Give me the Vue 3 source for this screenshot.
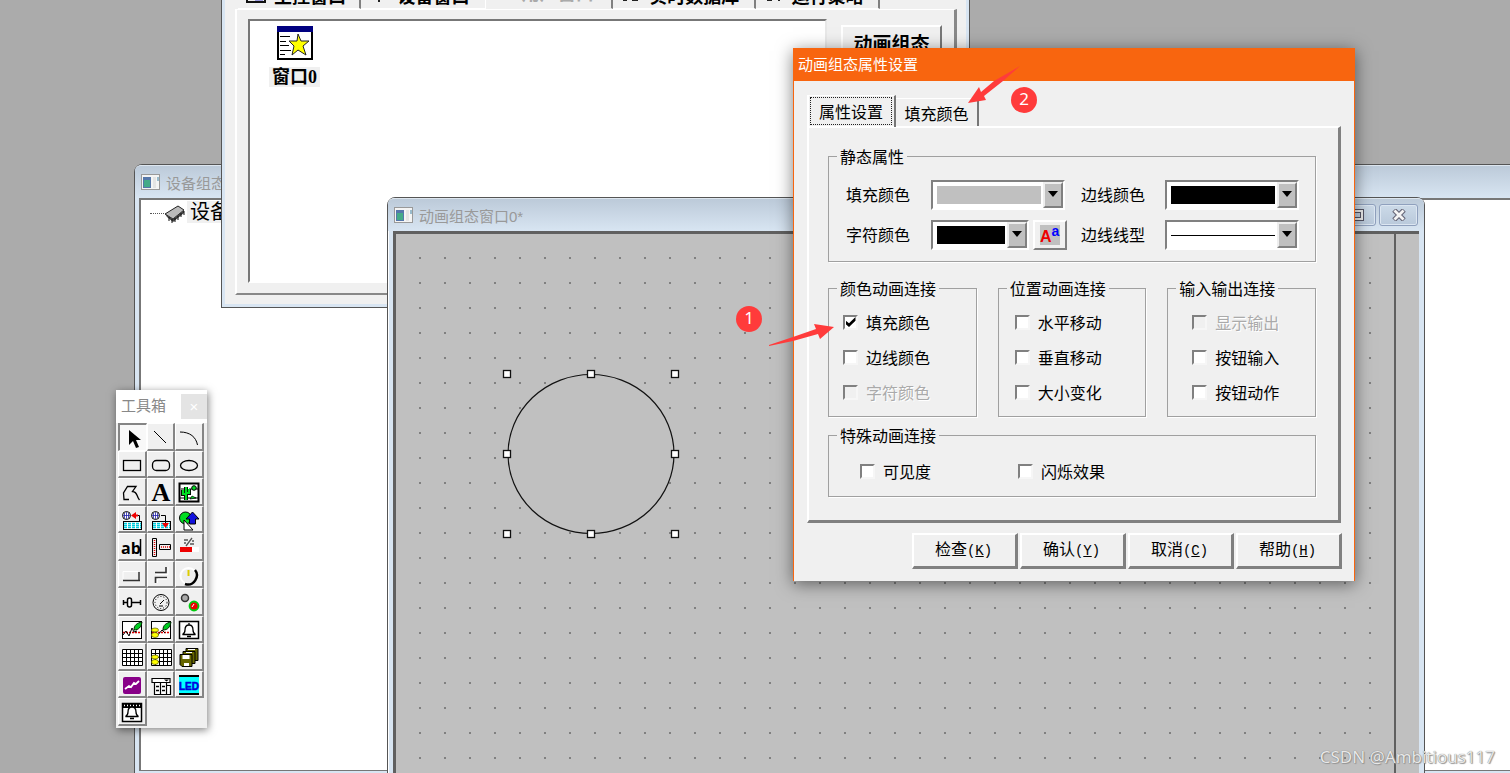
<script setup>
import { ref, reactive } from 'vue'

const fillColor = ref('#c0c0c0')
const edgeColor = ref('#000000')
const charColor = ref('#000000')
const lineStyle = ref('solid')

const groups = reactive([
  {
    title: '颜色动画连接', kind: 'near',
    items: [
      { id: 'c-fill', text: '填充颜色', on: true },
      { id: 'c-edge', text: '边线颜色', on: false },
      { id: 'c-char', text: '字符颜色', on: false, disabled: true }
    ]
  },
  {
    title: '位置动画连接', kind: 'middle',
    items: [
      { id: 'p-h', text: '水平移动', on: false },
      { id: 'p-v', text: '垂直移动', on: false },
      { id: 'p-s', text: '大小变化', on: false }
    ]
  },
  {
    title: '输入输出连接', kind: 'far',
    items: [
      { id: 'i-show', text: '显示输出', on: false, disabled: true },
      { id: 'i-in', text: '按钮输入', on: false },
      { id: 'i-act', text: '按钮动作', on: false }
    ]
  }
])
const special = reactive([
  { id: 's-vis', text: '可见度', on: false },
  { id: 's-blink', text: '闪烁效果', on: false }
])
const actions = [
  { text: '检查', key: 'K' },
  { text: '确认', key: 'Y' },
  { text: '取消', key: 'C' },
  { text: '帮助', key: 'H' }
]
const handles = [
  [507, 374], [591, 374], [675, 374], [507, 454],
  [675, 454], [507, 534], [591, 534], [675, 534]
]

const k = 'fill="none" stroke="#000"'
const grid = '<path d="M4.500 5.500h20v16h-20zM8.500 5.500v16M12.500 5.500v16M16.500 5.500v16M20.500 5.500v16M4.500 9.500h20M4.500 13.500h20M4.500 17.500h20" fill="#fff" stroke="#000"/>'
const globe = '<circle cx="8.500" cy="8.500" r="4" fill="#fff" stroke="#000"/><path d="M5 8.500h7M8.500 5v7M6.500 6v5M10.500 6v5" stroke="#22a" stroke-width=".8"/>'
const cyan = '<rect x="5.500" y="14.500" width="18" height="8" fill="#fff" stroke="#000"/><path d="M6 16.500h17M6 18.500h17M6 20.500h17" stroke="#0cd" stroke-width="1.400" stroke-dasharray="3 1"/>'
const coins = '<g fill="#ff0" stroke="#550" stroke-width=".7"><ellipse cx="8" cy="18" rx="3.500" ry="2.500"/><ellipse cx="8" cy="13" rx="3.500" ry="2"/></g>'
const leaf = '<path d="M16 13c0-5 3-7 8-8-1 5-3 8-8 8z" fill="#0c2" stroke="#020"/>'
const bell = '<path d="M14 6v2M7.500 17.500c2-1 2.500-2 2.500-4.500 0-3 1.500-5 4-5s4 2 4 5c0 2.500.5 3.500 2.500 4.500zM12 19.500h4" fill="#fff" stroke="#000" stroke-width="1.300"/>'
const tools = [
  { name: '选择', svg: '<path d="M10 5v15l4-4 3 7 3-1-3-7h5z"/>' },
  { name: '直线', svg: `<path d="M7 7l12 12" ${k}/>` },
  { name: '弧线', svg: `<path d="M5 8C15 8 21 13 22.500 21" ${k}/>` },
  { name: '矩形', svg: `<rect x="5.500" y="8.500" width="17" height="10" ${k} stroke-width="1.300"/>` },
  { name: '圆角矩形', svg: `<rect x="5.500" y="8.500" width="17" height="10" rx="4" ${k} stroke-width="1.300"/>` },
  { name: '椭圆', svg: `<ellipse cx="14" cy="13.500" rx="8.500" ry="5" ${k} stroke-width="1.300"/>` },
  { name: '多边形', svg: `<path d="M11 20.500H6L5.500 14 9.500 7.500H18L14.500 12.500C20 13 18 17 21.500 21" ${k} stroke-width="1.300"/>` },
  { name: '标签', svg: '<text x="14" y="21.500" text-anchor="middle" font-family="Liberation Serif, serif" font-weight="bold" font-size="26">A</text>' },
  { name: '位图', svg: '<rect x="4.500" y="4.500" width="19" height="18" fill="#fff" stroke="#000" stroke-width="2"/><path d="M5 19h18M14 10h9M6 10h3" stroke="#000"/><path d="M11 21V8M8 11v4h3M14 10v4h-3" fill="none" stroke="#000" stroke-width="4"/><path d="M11 21V8M8 11v4h3M14 10v4h-3" fill="none" stroke="#0d2" stroke-width="2.200"/><circle cx="19" cy="9" r="2.300" fill="#0d2" stroke="#000"/><path d="M15 20l2-3 4 2z" fill="#0d2" stroke="#000" stroke-width=".7"/>' },
  { name: '插入元件', svg: globe + cyan + '<path d="M18 8.500h3.500v6" fill="none" stroke="#000"/><path d="M13 8.500l5-3.500v2.500h2v2h-2V12z" fill="#e00"/>' },
  { name: '保存元件', svg: globe + cyan + '<path d="M14 8.500h4.500v8" fill="none" stroke="#000"/><path d="M15 16h7l-3.500 5z" fill="#e00"/>' },
  { name: '常用符号', svg: '<circle cx="10.500" cy="11" r="6" fill="#0d2" stroke="#000"/><path d="M9 13l9 10H9z" fill="#fff" stroke="#000"/><path d="M17.500 5l6.500 7h-3.500v5h-6v-5H11z" fill="#11d" stroke="#000"/>' },
  { name: '输入框', svg: '<text x="3" y="20" font-family="Open Sans, sans-serif" font-weight="bold" font-size="16">ab</text><path d="M22.500 5v17" stroke="#000" stroke-width="1.500"/>' },
  { name: '流动块', svg: `<path d="M5.500 4.500h4v18h-4zM12.500 10.500h11v5h-11z" ${k}/><path d="M7.500 6v15M14 13h9" stroke="#d00" stroke-width="1.500" stroke-dasharray="1 1"/>` },
  { name: '百分比', svg: '<path d="M17 4l-6 8M9 6h4M15 10h4M9 9h2M17 7h2" stroke="#555" stroke-width="1.300"/><path d="M5 13h12v5H5z" fill="#e00"/><path d="M17 13h7v5h-7z" fill="#fff"/>' },
  { name: '标准按钮', svg: '<path d="M5 18.500h17" stroke="#333" stroke-width="1.500"/><path d="M21 10v9" stroke="#333" stroke-width="1.500"/><path d="M5 17V9.500h15" fill="none" stroke="#fff"/>' },
  { name: '自由管道', svg: '<path d="M8 10.500h11V5M8.500 21v-5.500H20" fill="none" stroke="#333" stroke-width="1.600"/><path d="M9 12.500h12V5M10.500 21v-4H20" fill="none" stroke="#fff"/>' },
  { name: '旋钮', svg: '<circle cx="13.500" cy="14" r="8" fill="#eee" stroke="#fff" stroke-width="2"/><path d="M20 8c5 6-1 17-10 14" fill="none" stroke="#000" stroke-width="2.500"/><path d="M13.500 8v6" stroke="#dc0" stroke-width="2"/>' },
  { name: '滑动输入', svg: '<path d="M5 13.500h18M5.500 11v5M22.500 11v5" stroke="#000" stroke-width="1.500"/><rect x="9.500" y="9" width="4" height="9" rx="2" fill="#fff" stroke="#000" stroke-width="1.500"/>' },
  { name: '仪表', svg: `<circle cx="14" cy="13.500" r="8" ${k}/><circle cx="14" cy="13.500" r="6" ${k} stroke-dasharray="1 2"/><path d="M13 15l4-4M12 17h4" ${k}/>` },
  { name: '动画按钮', svg: '<circle cx="10" cy="9" r="3.500" fill="#aaa" stroke="#333" stroke-width="1.500"/><circle cx="19" cy="17" r="4.500" fill="#e00" stroke="#0c1" stroke-width="1.800"/><path d="M17 18l2-3" stroke="#fff"/>' },
  { name: '实时曲线', svg: `<rect x="4.500" y="4.500" width="19" height="17" fill="#fff" stroke="#000"/><path d="M5 15.500h18" stroke="#d00" stroke-width="1.500" stroke-dasharray="2 1"/><path d="M5 18l3-4 3 5 3-8 2 4 3-1" ${k}/>` + leaf },
  { name: '历史曲线', svg: `<rect x="4.500" y="4.500" width="19" height="17" fill="#fff" stroke="#000"/><path d="M5 15.500h18" stroke="#d00" stroke-width="1.500" stroke-dasharray="2 1"/><path d="M10 19l5-6 3 3" ${k}/>` + coins + leaf },
  { name: '报警显示', svg: '<rect x="4.500" y="4.500" width="19" height="17" fill="#fff" stroke="#000" stroke-width="1.500"/>' + bell },
  { name: '自由表格', svg: grid },
  { name: '历史表格', svg: grid + coins },
  { name: '存盘浏览', svg: '<g fill="#660" stroke="#000"><path d="M11 4.500h12v12H11z"/><path d="M8 7.500h12v12H8z"/><path d="M5 10.500h12v12H7l-2-2z"/></g><path d="M7.500 11h7v4h-7zM9 19h5v3H9zM13 5h7v1h-7zM11 8h6v1h-6z" fill="#fff"/>' },
  { name: '计划曲线', svg: '<rect x="5" y="5" width="18" height="17" rx="2" fill="#808"/><path d="M7 17l4-3 2 1 3-4 2 1 3-3" fill="none" stroke="#fff" stroke-width="1.800"/>' },
  { name: '组合框', svg: '<path d="M5 6.500h18v4H5zM7.500 10.500h12v12h-12zM13.500 10.500v12M19.500 13.500h4v9h-4" fill="#fff" stroke="#000" stroke-width="1.200"/><path d="M9 14.500h3M9 18.500h3M15 14.500h3M15 18.500h3" stroke="#000" stroke-width="1.500"/><path d="M17 7.500h5l-2.500 2z"/>' },
  { name: '数码显示', svg: '<path d="M4 4h20v18H4z" fill="#0ff"/><path d="M4 3h20v2H4zM4 21h20v2H4z"/><text x="14" y="18" text-anchor="middle" font-family="Liberation Sans, sans-serif" font-weight="bold" font-size="10" stroke="#00d" stroke-width=".5" fill="#00d">LED</text>' },
  { name: '报警浏览', svg: '<rect x="4.500" y="4.500" width="19" height="18" fill="#fff" stroke="#000" stroke-width="1.500"/><path d="M4 4h20v5H4z"/><path d="M6 6.500h17" stroke="#fff" stroke-width="1.500" stroke-dasharray="1 2"/>' + bell }
]
</script>

<template>
  <main class="desktop">
    <section class="win device">
      <header class="caption">
        <svg class="appicon" width="19" height="18" viewBox="0 0 19 18"><rect x=".5" y="1.500" width="18" height="15" fill="#f4f4f4" stroke="#999" /><rect x="2" y="4" width="8" height="11" fill="#57a" /><rect x="3" y="7" width="6" height="7" fill="#4a8" /><rect x="12" y="4" width="3" height="11" fill="#e4e4e4" /><rect x="16" y="4" width="2" height="4" fill="#9bc" /></svg>
        <span>设备组态</span>
      </header>
      <div class="tree">
        <i class="branch"></i>
        <svg width="22" height="18" viewBox="0 0 22 18"><path d="M1 9L14 1l6 4-11 9z" fill="#bbb" stroke="#222" /><path d="M1 9l8 5 11-9v3L9 17 3 12z" fill="#444" /><path d="M5 12v4M8 14v4M11 13v4M14 11v4M17 8v4M20 6v4" stroke="#111" /></svg>
        <span class="node">设备</span>
      </div>
    </section>

    <section class="win project">
      <nav class="tabs">
        <button type="button" class="t1"><svg width="20" height="18" viewBox="0 0 20 18"><path d="M1 1h18v15H1z" fill="#eee" stroke="#111" stroke-width="2" /><path d="M9 5h8v10H9z" fill="#99d" /></svg>主控窗口</button>
        <button type="button" class="t2"><svg width="20" height="18" viewBox="0 0 20 18"><path d="M5 10h8v2h-2v4H9v-3H5z" fill="#222" /></svg>设备窗口</button>
        <button type="button" class="t3"><svg width="20" height="18" viewBox="0 0 20 18"><path d="M0 16h20" stroke="#daa" stroke-width="2" /></svg>用户窗口</button>
        <button type="button" class="t4"><svg width="20" height="18" viewBox="0 0 20 18"><path d="M2 9h4v6H2zM11 11h6v4h-6z" fill="#222" /></svg>实时数据库</button>
        <button type="button" class="t5"><svg width="20" height="18" viewBox="0 0 20 18"><path d="M3 9h5v6H3zM11 7h5v8h-2v-5h-3z" fill="#222" /></svg>运行策略</button>
      </nav>
      <div class="page">
        <div class="list">
          <a class="file" href="#win0">
            <svg width="36" height="34" viewBox="0 0 36 34"><path d="M1 1h34v32H1z" fill="#fff" stroke="#000" stroke-width="2" /><path d="M0 0h36v6H0z" fill="#000080" /><path d="M3 10.500h10M3 15.500h6M3 19.500h9M3 24.500h11M3 28.500h5" stroke="#000" /><path d="M21 8l3 7h8l-6 5 3 9-8-5-6 5 2-9-5-5h8z" fill="#ff0" stroke="#222" /></svg>
            <b>窗口0</b>
          </a>
        </div>
        <button type="button" class="animate">动画组态</button>
      </div>
    </section>

    <section class="win canvas-win">
      <header class="caption">
        <svg class="appicon" width="19" height="18" viewBox="0 0 19 18"><rect x=".5" y="1.500" width="18" height="15" fill="#f4f4f4" stroke="#999" /><rect x="2" y="4" width="8" height="11" fill="#57a" /><rect x="3" y="7" width="6" height="7" fill="#4a8" /><rect x="12" y="4" width="3" height="11" fill="#e4e4e4" /><rect x="16" y="4" width="2" height="4" fill="#9bc" /></svg>
        <span>动画组态窗口0*</span>
        <div class="sys">
          <button type="button" aria-label="最大化"><svg width="14" height="12" viewBox="0 0 14 12"><rect x="2" y="2" width="10" height="8" fill="none" stroke="#556" stroke-width="4" /><rect x="2" y="2" width="10" height="8" fill="none" stroke="#eee" stroke-width="2" /></svg></button>
          <button type="button" aria-label="关闭"><svg width="14" height="12" viewBox="0 0 14 12"><path d="M2 1l10 10M12 1L2 11" stroke="#667" stroke-width="5" /><path d="M2.500 1.500l9 9M11.500 1.500l-9 9" stroke="#f4f4f4" stroke-width="2.800" /></svg></button>
        </div>
      </header>
      <div class="stage"><div class="dots"></div><div class="gutter"></div></div>
    </section>

    <svg class="shape" width="180" height="172" viewBox="501 368 180 172">
      <ellipse cx="591" cy="454" rx="83" ry="79.500" fill="#c0c0c0" stroke="#111" stroke-width="1.200" />
      <rect v-for="(h, i) in handles" :key="i" :x="h[0] - 3.5" :y="h[1] - 3.5" width="7" height="7" fill="#fff" stroke="#111" stroke-width="1.300" />
    </svg>

    <aside class="toolbox">
      <header><span>工具箱</span><button type="button">×</button></header>
      <div class="tools">
        <button v-for="(t, i) in tools" :key="t.name" type="button" :class="{ down: i === 0 }" :aria-label="t.name">
          <svg width="28" height="27" viewBox="1 0 28 27" v-html="t.svg"></svg>
        </button>
      </div>
    </aside>

    <form class="dialog" @submit.prevent>
      <header>动画组态属性设置</header>
      <div class="body">
        <nav class="dtabs">
          <button type="button" class="active"><span>属性设置</span></button>
          <button type="button">填充颜色</button>
        </nav>
        <div class="sheet">
          <fieldset class="static">
            <legend>静态属性</legend>
            <div class="fields">
              <label for="fill">填充颜色</label>
              <div class="combo"><select id="fill" v-model="fillColor" :style="{ '--swatch': fillColor }"><option value="#c0c0c0"></option></select><i></i></div>
              <label for="edge">边线颜色</label>
              <div class="combo"><select id="edge" v-model="edgeColor" :style="{ '--swatch': edgeColor }"><option value="#000000"></option></select><i></i></div>
              <label for="char">字符颜色</label>
              <div class="pair">
                <div class="combo"><select id="char" v-model="charColor" :style="{ '--swatch': charColor }"><option value="#000000"></option></select><i></i></div>
                <button type="button" class="font" aria-label="字体"><span><b>A</b><sup>a</sup></span></button>
              </div>
              <label for="line">边线线型</label>
              <div class="combo line"><select id="line" v-model="lineStyle"><option value="solid"></option></select><i></i></div>
            </div>
          </fieldset>
          <div class="groups">
            <fieldset v-for="g in groups" :key="g.title" :class="g.kind">
              <legend>{{ g.title }}</legend>
              <label v-for="c in g.items" :key="c.id" :for="c.id" class="check" :class="{ off: c.disabled }">
                <input :id="c.id" v-model="c.on" type="checkbox" :disabled="c.disabled"><span>{{ c.text }}</span>
              </label>
            </fieldset>
          </div>
          <fieldset class="special">
            <legend>特殊动画连接</legend>
            <label v-for="c in special" :key="c.id" :for="c.id" class="check">
              <input :id="c.id" v-model="c.on" type="checkbox"><span>{{ c.text }}</span>
            </label>
          </fieldset>
        </div>
        <footer>
          <button v-for="a in actions" :key="a.key" type="button">{{ a.text }}<span>(<u>{{ a.key }}</u>)</span></button>
        </footer>
      </div>
    </form>

    <span class="badge one">1</span>
    <span class="badge two">2</span>
    <svg class="arrow a1" width="68" height="26" viewBox="768 322 68 26"><path d="M769 345l24-8 23-8-2-5 20 3-14 12-2-5-25 7-24 5z" fill="#ff3b3b" /></svg>
    <svg class="arrow a2" width="54" height="40" viewBox="967 65 54 40"><path d="M968 103l11-16 2 5 13-11 26-15-17 15-19 15 2 4z" fill="#ff3b3b" /></svg>
    <div class="mark">CSDN @Ambitious117</div>
  </main>
</template>

<style>
body { margin: 0; overflow: hidden; }
</style>

<style scoped>
* { box-sizing: border-box; }
button, input, select { font: inherit; color: inherit; margin: 0; padding: 0; border-radius: 0; }
.desktop { position: relative; height: 100vh; overflow: hidden; background: #ababab; font-family: "Liberation Sans", "Noto Sans CJK SC", sans-serif; font-size: 16px; color: #000; }
.win { position: absolute; display: flex; flex-direction: column; border: 1px solid #555; background: #d8e5f2; }
.caption { display: flex; align-items: center; gap: 6px; height: 33px; flex: none; background: linear-gradient(#bccad9, #d8e5f2); color: #999; font-size: 15px; border-top: 1px solid #dde6ef; border-radius: 6px 6px 0 0; }

.device { left: 134px; right: -8px; top: 164px; bottom: -2px; padding: 0 5px 3px 4px; border-radius: 8px 0 0 0; }
.device .caption { margin: 0 -5px 0 -4px; padding-left: 6px; height: 33px; }
.tree { flex: 1; display: flex; align-items: flex-start; background: #fff; border: solid #777; border-width: 2px 0 1px 2px; padding: 1px 0 0 9px; }
.branch { width: 14px; margin-top: 12px; border-top: 1px dotted #555; }
.tree svg { margin-top: 4px; }
.node { margin-left: 1px; padding: 0 3px; background: #f0f0f0; font-size: 20px; line-height: 22px; }

.project { left: 221px; top: -30px; width: 749px; height: 338px; padding: 0 3px 4px; box-shadow: inset 0 0 0 3px #d8e5f2; background: #f0f0f0; }
.tabs { display: flex; height: 38px; flex: none; padding: 0 86px 0 13px; align-items: stretch; }
.tabs button { display: flex; align-items: center; gap: 8px; padding: 10px 0 0 8px; border: 0; background: transparent; font-size: 18px; font-weight: bold; white-space: nowrap; border-right: 2px solid #808080; border-bottom: 1px solid #fff; }
.tabs svg { flex: none; }
.tabs .t1 { width: 124px; }
.tabs .t2 { width: 125px; border-right: 1px solid #fff; }
.tabs .t3 { width: 128px; color: #aaa; border-bottom-color: transparent; padding-top: 5px; }
.tabs .t4 { width: 143px; }
.tabs .t5 { width: 125px; }
.page { flex: 1; display: flex; gap: 14px; margin: 0 9px 8px 10px; padding: 9px 12px 10px 11px; border: solid; border-width: 1px 3px 2px 2px; border-color: #fff #888 #888 #fff; }
.list { flex: 1; background: #fff; border: solid; border-width: 2px; border-color: #777 #e8e8e8 #fff #777; padding: 5px 19px; }
.file { display: inline-flex; flex-direction: column; align-items: center; gap: 7px; color: #000; text-decoration: none; }
.file b { padding: 0 3px; background: #f0f0f0; font: bold 18px/20px "Liberation Serif", "Noto Sans CJK SC", sans-serif; }
.animate { width: 101px; height: 34px; margin-top: 6px; background: #f0f0f0; border: 2px solid; border-color: #fff #777 #777 #fff; font-size: 19px; font-weight: bold; }

.canvas-win { left: 387px; right: 85px; top: 197px; bottom: -8px; padding: 0 5px; border-radius: 8px 8px 0 0; box-shadow: inset 1px 0 #fff; }
.canvas-win .caption { margin: 0 -5px; padding: 0 6px 0; }
.sys { display: flex; gap: 3px; margin-left: auto; }
.sys button { display: grid; place-items: center; width: 39px; height: 22px; border: 1px solid #8fa0bd; border-radius: 3px; background: linear-gradient(#ccdae8, #b9c9db); box-shadow: inset 0 0 0 1px #dce6f1; }
.stage { flex: 1; display: flex; background: #c0c0c0; border: solid; border-width: 3px 0 0 3px; border-color: #606060; }
.dots { flex: 1; background: radial-gradient(circle at 12px 12px, #808080 1px, transparent 1px) 12px 12px / 25px 25px; border-right: 2px solid #606060; }
.gutter { width: 23px; }
.shape { position: absolute; left: 501px; top: 368px; }

.toolbox { position: absolute; left: 116px; top: 390px; width: 91px; background: #f0f0f0; box-shadow: 1px 2px 8px rgba(0, 0, 0, .5); }
.toolbox header { display: flex; justify-content: space-between; align-items: center; height: 33px; padding-left: 5px; background: #fff; color: #888; font-size: 15px; line-height: 20px; }
.toolbox header span { padding-bottom: 2px; }
.toolbox header button { width: 26px; height: 25px; border: 0; background: #e4e4e4; color: #fff; }
.tools { display: grid; grid-template-columns: repeat(3, 1fr); grid-template-rows: repeat(11, 1fr); height: 303px; margin: 0 3px 2px 2px; }
.tools button { display: grid; place-items: center; overflow: hidden; background: #f0f0f0; border: solid; border-width: 1px 2px 2px 1px; border-color: #fff #858585 #858585 #fff; }
.tools .down { border-width: 2px 1px 1px 2px; border-color: #858585 #fff #fff #858585; background: #f8f8f8; }

.dialog { position: absolute; left: 793px; top: 48px; width: 562px; background: #f0f0f0; border: solid #f8650f; border-width: 0 1px; box-shadow: 0 3px 16px rgba(0, 0, 0, .5); font-family: "Noto Sans CJK SC", sans-serif; }
.dialog > header { height: 33px; padding-left: 4px; line-height: 31px; font-size: 15px; color: #fff; background: #f8650f; }
.body { padding: 14px 13px 12px; }
.dtabs { display: flex; align-items: flex-end; }
.dtabs button { height: 28px; width: 83px; background: transparent; border: solid; border-width: 1px 2px 0 0; border-color: #fff #777; }
.dtabs .active { height: 32px; width: 89px; margin-bottom: -1px; padding: 1px 2px 5px 1px; border-width: 1px 2px 0 2px; border-color: #fff #777 #fff #fff; }
.active span { display: block; border: 1px dotted #222; line-height: 26px; }
.sheet { border: solid; border-width: 2px 3px 3px 2px; border-color: #fff #808080 #808080 #fff; padding: 18px 22px 23px 19px; line-height: 20px; }
fieldset { --inset: 14px; min-width: 0; margin: 0; border: 1px solid #a0a0a0; box-shadow: 1px 1px #fff; }
legend { margin-left: calc(8px - var(--inset)); padding: 0 3px; line-height: 20px; }
.static { --inset: 17px; padding: 14px 16px 11px var(--inset); }
.fields { display: grid; grid-template-columns: 85px 134px 1fr 134px; row-gap: 10px; align-items: center; }
.fields > label { padding-bottom: 3px; }
.fields > label:nth-of-type(even) { padding-left: 16px; }
.combo { position: relative; height: 30px; width: 134px; }
.combo select { appearance: none; display: block; width: 100%; height: 30px; border: 2px solid; border-color: #808080 #fff #fff #808080; background: linear-gradient(var(--swatch), var(--swatch)) 4px 4px / calc(100% - 26px) 18px no-repeat #fff; }
.line select { background: linear-gradient(#000, #000) 4px 13px / calc(100% - 26px) 1px no-repeat #fff; }
.combo i { position: absolute; right: 2px; top: 2px; width: 20px; height: 26px; background: #c0c0c0; border: 2px solid; border-color: #eee #808080 #808080 #eee; pointer-events: none; }
.combo i::after { content: ""; position: absolute; left: 3px; top: 7px; border: 5px solid transparent; border-top: 6px solid #000; border-bottom: 0; }
.pair { display: flex; gap: 4px; }
.pair .combo { width: 98px; flex: none; }
.font { flex: none; width: 34px; height: 30px; background: #f0f0f0; border: 2px solid; border-color: #fff #808080 #808080 #fff; display: grid; place-items: center; }
.font span { display: flex; align-items: flex-end; width: 20px; height: 20px; background: #c0c0c0; color: #e00; font: bold 16px/16px "Liberation Sans", sans-serif; }
.font sup { align-self: flex-start; font-size: 14px; line-height: 12px; color: #00f; }
.groups { display: grid; grid-template-columns: repeat(3, 1fr); gap: 21px; margin: 16px 0 8px; }
.groups fieldset { display: flex; flex-direction: column; gap: 15px; padding: 14px 0 14px var(--inset); }
.groups .middle { --inset: 16px; }
.groups .far { --inset: 24px; }
.check { display: flex; align-items: center; gap: 8px; }
.check input { appearance: none; width: 15px; height: 15px; background: #fff; border: 2px solid; border-color: #808080 #f6f6f6 #f6f6f6 #808080; display: grid; place-items: center; }
.check input:checked::after { content: ""; width: 10px; height: 10px; background: #000; clip-path: polygon(0 35%, 35% 62%, 100% 0, 100% 38%, 35% 100%, 0 70%); }
.off { color: #aaa; text-shadow: 1px 1px #fff; }
.check input:disabled { background: #f0f0f0; }
.special { --inset: 31px; display: grid; grid-template-columns: 158px 1fr; padding: 16px 31px 15px var(--inset); }
footer { display: flex; justify-content: flex-end; gap: 2px; margin-right: -1px; padding-top: 10px; }
footer button { width: 106px; height: 36px; padding: 0 2px 2px 0; background: #f0f0f0; border: solid; border-width: 2px 3px 3px 2px; border-color: #fff #808080 #808080 #fff; line-height: 24px; }
footer span { font-family: "Liberation Mono", monospace; font-size: 14px; }

.badge { position: absolute; width: 26px; height: 26px; border-radius: 50%; background: #ff3b3b; color: #fff; text-align: center; font: 17px/24px "Noto Sans", sans-serif; }
.one { left: 736px; top: 306px; }
.two { left: 1011px; top: 87px; }
.arrow { position: absolute; }
.a1 { left: 768px; top: 322px; }
.a2 { left: 967px; top: 65px; }
.mark { position: absolute; right: 15px; bottom: 5px; font: 17px/22px "Noto Sans", sans-serif; color: #e8e8e8; text-shadow: 0 0 1px #666, 1px 1px 1px #999; }
</style>
